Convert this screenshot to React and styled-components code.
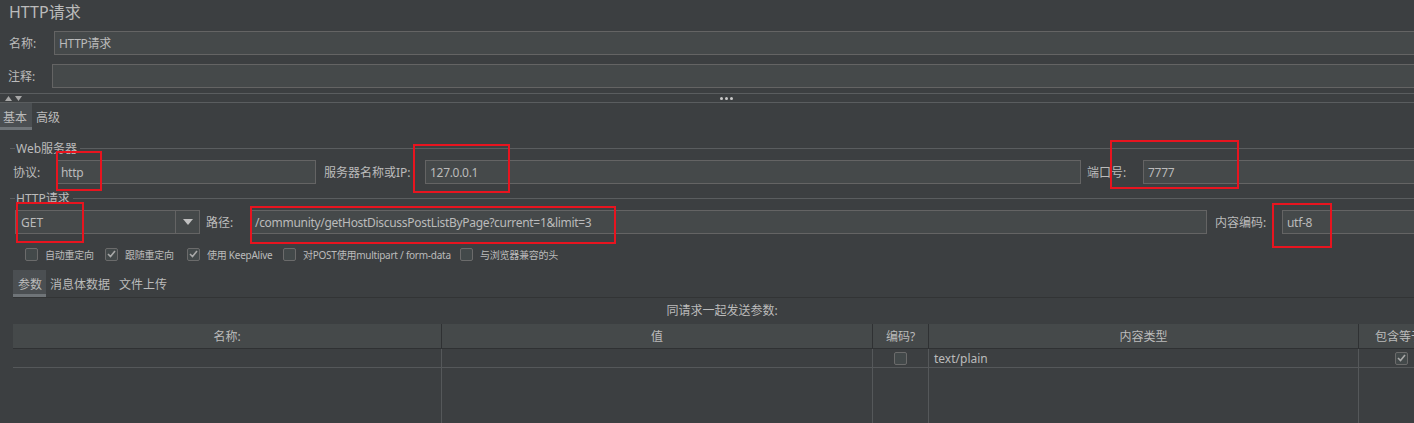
import React from "react";
import styled, { createGlobalStyle } from "styled-components";

const Global = createGlobalStyle`
  html, body { margin: 0; padding: 0; background: #3c3f41; overflow: hidden; }
`;

const Page = styled.div`
  position: relative;
  width: 1444px;
  height: 423px;
  display: flex;
  flex-direction: column;
  color: #bbbbbb;
  font-family: "Noto Sans", "Noto Sans CJK SC", sans-serif;
  font-size: 12px;
`;

const Title = styled.div`
  height: 25px;
  line-height: 25px;
  padding-left: 9px;
  font-size: 16px;
  margin-bottom: 6px;
`;

const Row = styled.div`
  display: flex;
  align-items: center;
  flex: none;
  height: ${(p) => p.$h || 24}px;
  padding-left: ${(p) => p.$pl || 0}px;
  margin-top: ${(p) => p.$mt || 0}px;
`;

const Label = styled.span`
  flex: none;
  width: ${(p) => p.$w}px;
  margin-left: ${(p) => p.$ml || 0}px;
  white-space: nowrap;
`;

const Input = styled.div`
  box-sizing: border-box;
  height: 100%;
  display: flex;
  align-items: center;
  padding-left: 4px;
  border: 1px solid #646464;
  background: #45494a;
  white-space: nowrap;
  overflow: hidden;
  letter-spacing: -0.3px;
  flex: ${(p) => (p.$w ? "none" : "1")};
  width: ${(p) => (p.$w ? `${p.$w}px` : "auto")};
`;

const Splitter = styled.div`
  margin-top: 5px;
  height: 8px;
  border-top: 1px solid #5a5d5f;
  border-bottom: 1px solid #5a5d5f;
  display: flex;
  align-items: center;
  padding-left: 5px;
`;

const Arrows = styled.div`
  display: flex;
  gap: 3px;
  width: 17px;
`;

const Dots = styled.div`
  margin-left: 698px;
  display: flex;
  gap: 2px;
  span {
    width: 3px;
    height: 3px;
    border-radius: 50%;
    background: #c8c8c8;
  }
`;

const TabBar = styled.div`
  display: flex;
  height: 27px;
  flex: none;
  margin-left: ${(p) => p.$ml || 0}px;
  margin-top: ${(p) => p.$mt || 0}px;
  border-bottom: ${(p) => (p.$line ? "1px solid #323435" : "none")};
`;

const Tab = styled.div`
  box-sizing: border-box;
  display: flex;
  align-items: center;
  padding: 0 ${(p) => p.$pr}px 0 ${(p) => p.$pl}px;
  background: ${(p) => (p.$active ? "#4b4f52" : "transparent")};
  border-bottom: 3px solid ${(p) => (p.$active ? "#6f7478" : "transparent")};
  padding-top: 3px;
`;

const GroupHeader = styled.div`
  display: flex;
  align-items: center;
  height: 14px;
  flex: none;
  margin-top: ${(p) => p.$mt}px;
  padding-left: 10px;
  gap: 1px;
  &::before {
    content: "";
    width: 5px;
    height: 1px;
    background: #5a5d5f;
  }
  &::after {
    content: "";
    flex: 1;
    height: 1px;
    margin-left: 2px;
    background: #5a5d5f;
  }
`;

const Combo = styled.div`
  box-sizing: border-box;
  flex: none;
  width: 185px;
  height: 100%;
  display: flex;
  border: 1px solid #646464;
  background: #45494a;
`;

const ComboText = styled.div`
  flex: 1;
  display: flex;
  align-items: center;
  padding-left: 5px;
`;

const ComboArrow = styled.div`
  width: 23px;
  border-left: 1px solid #646464;
  display: flex;
  align-items: center;
  justify-content: center;
`;

const CheckItem = styled.div`
  display: flex;
  align-items: center;
  gap: 7px;
  flex: none;
  width: ${(p) => (p.$w ? `${p.$w}px` : "auto")};
  font-size: 10px;
  letter-spacing: -0.25px;
`;

const Box = styled.div`
  box-sizing: border-box;
  width: 13px;
  height: 13px;
  border: 1px solid #6b6b6b;
  border-radius: 2px;
  background: #43494a;
  display: flex;
  align-items: center;
  justify-content: center;
  flex: none;
`;

const Caption = styled.div`
  height: 26px;
  line-height: 26px;
  text-align: center;
  flex: none;
`;

const Table = styled.div`
  margin-left: 13px;
  flex: 1;
  display: grid;
  grid-template-columns: 429px 431px 56px 430px 85px;
  grid-template-rows: 25px 19px 1fr;
`;

const HeadCell = styled.div`
  background: #45494a;
  border-bottom: 1px solid #2f3133;
  border-right: ${(p) => (p.$last ? "none" : "1px solid #2f3133")};
  display: flex;
  align-items: center;
  justify-content: center;
  white-space: nowrap;
  overflow: hidden;
`;

const Cell = styled.div`
  border-right: ${(p) => (p.$last ? "none" : "1px solid #55585a")};
  border-bottom: ${(p) => (p.$filler ? "none" : "1px solid #55585a")};
  display: flex;
  align-items: center;
  justify-content: ${(p) => (p.$center ? "center" : "flex-start")};
  padding-left: ${(p) => (p.$center ? 0 : 5)}px;
`;

const Mark = styled.div`
  position: absolute;
  left: ${(p) => p.$x}px;
  top: ${(p) => p.$y}px;
  width: ${(p) => p.$w}px;
  height: ${(p) => p.$h}px;
  box-sizing: border-box;
  border: 2px solid #e8141f;
  pointer-events: none;
`;

const Tri = ({ up }) => (
  <svg width="7" height="5" viewBox="0 0 7 5">
    <path d={up ? "M0 5 L3.5 0 L7 5 Z" : "M0 0 L3.5 5 L7 0 Z"} fill="#a8a8a8" />
  </svg>
);

const Check = ({ checked }) => (
  <Box>
    {checked && (
      <svg width="9" height="8" viewBox="0 0 9 8">
        <path d="M1 4 L3.5 6.5 L8 1" stroke="#a9a9a9" strokeWidth="1.6" fill="none" />
      </svg>
    )}
  </Box>
);

const options = [
  { label: "自动重定向", w: 80, c: false },
  { label: "跟随重定向", w: 82, c: true },
  { label: "使用 KeepAlive", w: 96, c: true },
  { label: "对POST使用multipart / form-data", w: 177, c: false },
  { label: "与浏览器兼容的头", c: false },
];

const marks = [
  { x: 56, y: 151, w: 46, h: 40 },
  { x: 413, y: 144, w: 97, h: 49 },
  { x: 1110, y: 140, w: 129, h: 49 },
  { x: 16, y: 202, w: 68, h: 41 },
  { x: 250, y: 206, w: 366, h: 38 },
  { x: 1272, y: 203, w: 60, h: 45 },
];

export default function App() {
  return (
    <>
      <Global />
      <Page>
        <Title>HTTP请求</Title>
        <Row $pl={9}>
          <Label $w={45}>名称:</Label>
          <Input>HTTP请求</Input>
        </Row>
        <Row $pl={8} $mt={9}>
          <Label $w={44}>注释:</Label>
          <Input />
        </Row>
        <Splitter>
          <Arrows>
            <Tri up />
            <Tri />
          </Arrows>
          <Dots>
            <span />
            <span />
            <span />
          </Dots>
        </Splitter>
        <TabBar>
          <Tab $active $pl={3} $pr={5}>基本</Tab>
          <Tab $pl={4} $pr={4}>高级</Tab>
        </TabBar>

        <GroupHeader $mt={11}>Web服务器</GroupHeader>
        <Row $pl={13} $mt={5} $h={24}>
          <Label $w={43}>协议:</Label>
          <Input $w={260}>http</Input>
          <Label $w={101} $ml={8}>服务器名称或IP:</Label>
          <Input $w={656}>127.0.0.1</Input>
          <Label $w={56} $ml={6}>端口号:</Label>
          <Input>7777</Input>
        </Row>

        <GroupHeader $mt={7}>HTTP请求</GroupHeader>
        <Row $pl={15} $mt={5} $h={24}>
          <Combo>
            <ComboText>GET</ComboText>
            <ComboArrow>
              <svg width="10" height="6" viewBox="0 0 10 6">
                <path d="M0 0 L5 6 L10 0 Z" fill="#c0c0c0" />
              </svg>
            </ComboArrow>
          </Combo>
          <Label $w={44} $ml={6}>路径:</Label>
          <Input $w={957}>/community/getHostDiscussPostListByPage?current=1&amp;limit=3</Input>
          <Label $w={67} $ml={8}>内容编码:</Label>
          <Input>utf-8</Input>
        </Row>

        <Row $pl={25} $mt={10} $h={20}>
          {options.map((o) => (
            <CheckItem key={o.label} $w={o.w}>
              <Check checked={o.c} />
              <span>{o.label}</span>
            </CheckItem>
          ))}
        </Row>

        <TabBar $ml={13} $mt={6} $line>
          <Tab $active $pl={5} $pr={4}>参数</Tab>
          <Tab $pl={4} $pr={4}>消息体数据</Tab>
          <Tab $pl={5} $pr={4}>文件上传</Tab>
        </TabBar>

        <Caption>同请求一起发送参数:</Caption>

        <Table>
          <HeadCell>名称:</HeadCell>
          <HeadCell>值</HeadCell>
          <HeadCell>编码?</HeadCell>
          <HeadCell>内容类型</HeadCell>
          <HeadCell $last>包含等于?</HeadCell>

          <Cell />
          <Cell />
          <Cell $center>
            <Check />
          </Cell>
          <Cell>text/plain</Cell>
          <Cell $center $last>
            <Check checked />
          </Cell>

          <Cell $filler />
          <Cell $filler />
          <Cell $filler />
          <Cell $filler />
          <Cell $filler $last />
        </Table>

        {marks.map((m, i) => (
          <Mark key={i} $x={m.x} $y={m.y} $w={m.w} $h={m.h} />
        ))}
      </Page>
    </>
  );
}
